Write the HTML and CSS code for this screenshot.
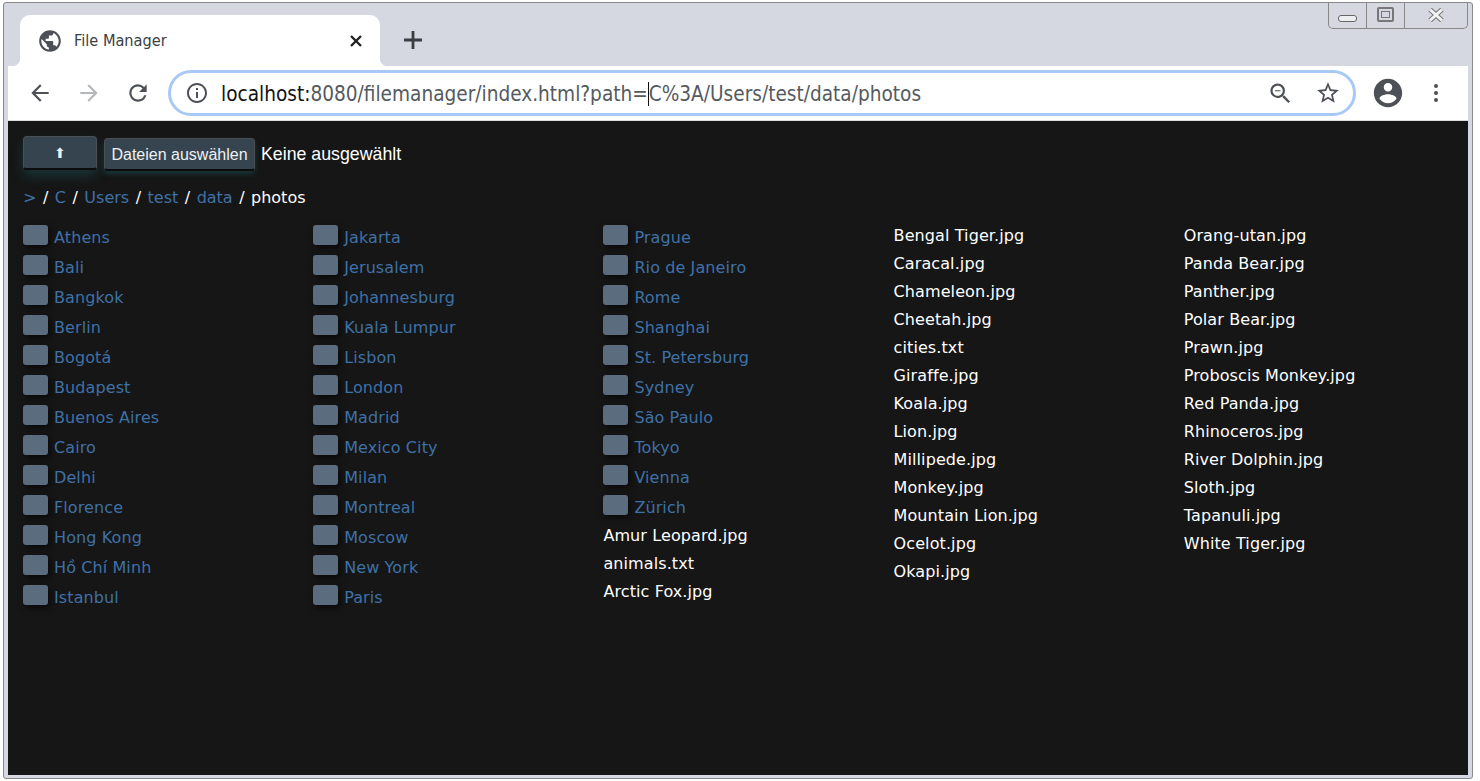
FILE: index.html
```html
<!DOCTYPE html>
<html lang="en">
<head>
    <meta charset="UTF-8">
    <title>File Manager</title>
    <link rel="stylesheet" href="styles.css">
</head>
<body>
    <div class="window">
        <div class="tabstrip">
            <div class="tab">
                <svg class="favicon" viewBox="0 0 24 24"><path d="M12 2C6.48 2 2 6.48 2 12s4.48 10 10 10 10-4.48 10-10S17.52 2 12 2zm-1 17.93c-3.95-.49-7-3.85-7-7.93 0-.62.08-1.21.21-1.79L9 15v1c0 1.1.9 2 2 2v1.93zm6.9-2.54c-.26-.81-1-1.39-1.9-1.39h-1v-3c0-.55-.45-1-1-1H8v-2h2c.55 0 1-.45 1-1V7h2c1.1 0 2-.9 2-2v-.41c2.93 1.19 5 4.06 5 7.41 0 2.08-.8 3.97-2.1 5.39z"/></svg>
                <span class="tab-title">File Manager</span>
                <svg class="tab-close" viewBox="0 0 14 14"><path d="M2 2l10 10M12 2L2 12"/></svg>
            </div>
            <svg class="new-tab" viewBox="0 0 20 20"><path d="M10 1v18M1 10h18"/></svg>
            <div class="win-controls">
                <div class="win-btn win-min"><span class="min-bar"></span></div>
                <div class="win-btn win-max"><span class="max-box"></span></div>
                <div class="win-btn win-close">
                    <svg viewBox="0 0 18 14"><path class="x-outer" d="M3 1.5l12 11M15 1.5l-12 11"/><path class="x-inner" d="M3 1.5l12 11M15 1.5l-12 11"/></svg>
                </div>
            </div>
        </div>
        <div class="toolbar">
            <svg class="tool-icon back" viewBox="0 0 24 24"><path d="M20 11H7.83l5.59-5.59L12 4l-8 8 8 8 1.41-1.41L7.83 13H20v-2z"/></svg>
            <svg class="tool-icon forward" viewBox="0 0 24 24"><path d="M4 11h12.17l-5.59-5.59L12 4l8 8-8 8-1.41-1.41L16.17 13H4v-2z"/></svg>
            <svg class="tool-icon reload" viewBox="0 0 24 24"><path d="M17.65 6.35A7.958 7.958 0 0 0 12 4c-4.42 0-7.99 3.58-7.99 8s3.57 8 7.99 8c3.73 0 6.84-2.55 7.73-6h-2.08A5.99 5.99 0 0 1 12 18c-3.31 0-6-2.69-6-6s2.69-6 6-6c1.66 0 3.14.69 4.22 1.78L13 11h7V4l-2.35 2.35z"/></svg>
            <div class="omnibox">
                <svg class="omni-icon" viewBox="0 0 24 24"><path d="M11 7h2v2h-2zm0 4h2v6h-2zm1-9C6.48 2 2 6.48 2 12s4.48 10 10 10 10-4.48 10-10S17.52 2 12 2zm0 18c-4.41 0-8-3.59-8-8s3.59-8 8-8 8 3.59 8 8-3.59 8-8 8z"/></svg>
                <div class="url"><span class="host">localhost:</span>8080/filemanager/index.html?path=<span class="caret"></span>C%3A/Users/test/data/photos</div>
                <svg class="omni-icon zoom-out" viewBox="0 0 24 24"><path d="M15.5 14h-.79l-.28-.27A6.471 6.471 0 0 0 16 9.5 6.5 6.5 0 1 0 9.5 16c1.61 0 3.09-.59 4.23-1.57l.27.28v.79l5 4.99L20.49 19l-4.99-5zm-6 0C7.01 14 5 11.99 5 9.5S7.01 5 9.5 5 14 7.01 14 9.5 11.99 14 9.5 14zM7 9h5v1H7z"/></svg>
                <svg class="omni-icon star" viewBox="0 0 24 24"><path d="M22 9.24l-7.19-.62L12 2 9.19 8.63 2 9.24l5.46 4.73L5.82 21 12 17.27 18.18 21l-1.63-7.03L22 9.24zM12 15.4l-3.76 2.27 1-4.28-3.32-2.88 4.38-.38L12 6.1l1.71 4.04 4.38.38-3.32 2.88 1 4.28L12 15.4z"/></svg>
            </div>
            <svg class="account" viewBox="0 0 24 24"><path d="M12 2C6.48 2 2 6.48 2 12s4.48 10 10 10 10-4.48 10-10S17.52 2 12 2zm0 3c1.66 0 3 1.34 3 3s-1.34 3-3 3-3-1.34-3-3 1.34-3 3-3zm0 14.2c-2.5 0-4.71-1.28-6-3.22.03-1.99 4-3.08 6-3.08 1.99 0 5.97 1.09 6 3.08-1.29 1.94-3.5 3.22-6 3.22z"/></svg>
            <svg class="menu-dots" viewBox="0 0 6 20"><circle cx="3" cy="3" r="2"/><circle cx="3" cy="10" r="2"/><circle cx="3" cy="17" r="2"/></svg>
        </div>
        <div class="page">
            <div class="actions">
                <button class="btn btn-up" type="button">⬆</button>
                <button class="btn btn-file" type="button">Dateien auswählen</button>
                <span class="no-file">Keine ausgewählt</span>
            </div>
            <div class="crumbs">
                <a>&gt;</a> / <a>C</a> / <a>Users</a> / <a>test</a> / <a>data</a> / photos
            </div>
            <div class="listing">
                <ul class="column">
                    <li class="dir"><span class="check"></span><a>Athens</a></li>
                    <li class="dir"><span class="check"></span><a>Bali</a></li>
                    <li class="dir"><span class="check"></span><a>Bangkok</a></li>
                    <li class="dir"><span class="check"></span><a>Berlin</a></li>
                    <li class="dir"><span class="check"></span><a>Bogotá</a></li>
                    <li class="dir"><span class="check"></span><a>Budapest</a></li>
                    <li class="dir"><span class="check"></span><a>Buenos Aires</a></li>
                    <li class="dir"><span class="check"></span><a>Cairo</a></li>
                    <li class="dir"><span class="check"></span><a>Delhi</a></li>
                    <li class="dir"><span class="check"></span><a>Florence</a></li>
                    <li class="dir"><span class="check"></span><a>Hong Kong</a></li>
                    <li class="dir"><span class="check"></span><a>Hồ Chí Minh</a></li>
                    <li class="dir"><span class="check"></span><a>Istanbul</a></li>
                </ul>
                <ul class="column">
                    <li class="dir"><span class="check"></span><a>Jakarta</a></li>
                    <li class="dir"><span class="check"></span><a>Jerusalem</a></li>
                    <li class="dir"><span class="check"></span><a>Johannesburg</a></li>
                    <li class="dir"><span class="check"></span><a>Kuala Lumpur</a></li>
                    <li class="dir"><span class="check"></span><a>Lisbon</a></li>
                    <li class="dir"><span class="check"></span><a>London</a></li>
                    <li class="dir"><span class="check"></span><a>Madrid</a></li>
                    <li class="dir"><span class="check"></span><a>Mexico City</a></li>
                    <li class="dir"><span class="check"></span><a>Milan</a></li>
                    <li class="dir"><span class="check"></span><a>Montreal</a></li>
                    <li class="dir"><span class="check"></span><a>Moscow</a></li>
                    <li class="dir"><span class="check"></span><a>New York</a></li>
                    <li class="dir"><span class="check"></span><a>Paris</a></li>
                </ul>
                <ul class="column">
                    <li class="dir"><span class="check"></span><a>Prague</a></li>
                    <li class="dir"><span class="check"></span><a>Rio de Janeiro</a></li>
                    <li class="dir"><span class="check"></span><a>Rome</a></li>
                    <li class="dir"><span class="check"></span><a>Shanghai</a></li>
                    <li class="dir"><span class="check"></span><a>St. Petersburg</a></li>
                    <li class="dir"><span class="check"></span><a>Sydney</a></li>
                    <li class="dir"><span class="check"></span><a>São Paulo</a></li>
                    <li class="dir"><span class="check"></span><a>Tokyo</a></li>
                    <li class="dir"><span class="check"></span><a>Vienna</a></li>
                    <li class="dir"><span class="check"></span><a>Zürich</a></li>
                    <li class="file">Amur Leopard.jpg</li>
                    <li class="file">animals.txt</li>
                    <li class="file">Arctic Fox.jpg</li>
                </ul>
                <ul class="column">
                    <li class="file">Bengal Tiger.jpg</li>
                    <li class="file">Caracal.jpg</li>
                    <li class="file">Chameleon.jpg</li>
                    <li class="file">Cheetah.jpg</li>
                    <li class="file">cities.txt</li>
                    <li class="file">Giraffe.jpg</li>
                    <li class="file">Koala.jpg</li>
                    <li class="file">Lion.jpg</li>
                    <li class="file">Millipede.jpg</li>
                    <li class="file">Monkey.jpg</li>
                    <li class="file">Mountain Lion.jpg</li>
                    <li class="file">Ocelot.jpg</li>
                    <li class="file">Okapi.jpg</li>
                </ul>
                <ul class="column">
                    <li class="file">Orang-utan.jpg</li>
                    <li class="file">Panda Bear.jpg</li>
                    <li class="file">Panther.jpg</li>
                    <li class="file">Polar Bear.jpg</li>
                    <li class="file">Prawn.jpg</li>
                    <li class="file">Proboscis Monkey.jpg</li>
                    <li class="file">Red Panda.jpg</li>
                    <li class="file">Rhinoceros.jpg</li>
                    <li class="file">River Dolphin.jpg</li>
                    <li class="file">Sloth.jpg</li>
                    <li class="file">Tapanuli.jpg</li>
                    <li class="file">White Tiger.jpg</li>
                </ul>
            </div>
        </div>
    </div>
</body>
</html>
```

FILE: styles.css
```css
html, body {
    margin: 0;
    height: 100%;
    background-color: #fff;
    overflow: hidden;
}
.window {
    box-sizing: border-box;
    display: flex;
    flex-direction: column;
    width: 1470px;
    height: 777px;
    margin: 2px 0 0 3px;
    padding: 0 4px 3px 4px;
    background-color: #d5d8e0;
    border: 1px solid #888;
    border-radius: 3px;
    font-family: "DejaVu Sans", sans-serif;
}

/* tab strip */
.tabstrip {
    display: flex;
    flex: none;
    align-items: flex-start;
    height: 63px;
    margin-right: -1px;
}
.tab {
    position: relative;
    box-sizing: border-box;
    display: flex;
    align-items: center;
    width: 360px;
    height: 51px;
    margin: 12px 0 0 12px;
    padding: 0 17px 0 17px;
    background-color: #fff;
    border-radius: 10px 10px 0 0;
}
.tab::before, .tab::after {
    content: "";
    position: absolute;
    bottom: 0;
    width: 8px;
    height: 8px;
}
.tab::before {
    left: -8px;
    background: radial-gradient(circle at 0 0, transparent 8px, #fff 8.5px);
}
.tab::after {
    right: -8px;
    background: radial-gradient(circle at 100% 0, transparent 8px, #fff 8.5px);
}
.favicon {
    width: 26px;
    height: 26px;
    fill: #4d5157;
}
.tab-title {
    flex: 1;
    margin-left: 11px;
    font-size: 16.2px;
    font-stretch: condensed;
    color: #3c4043;
}
.tab-close {
    width: 14px;
    height: 14px;
    fill: none;
    stroke: #222;
    stroke-width: 2.4;
}
.new-tab {
    width: 20px;
    height: 20px;
    margin: 27px 0 0 23px;
    fill: none;
    stroke: #3a3e42;
    stroke-width: 2.8;
}
.win-controls {
    box-sizing: border-box;
    display: flex;
    height: 26px;
    margin-left: auto;
    margin-right: 1px;
    background-color: #d5d8e0;
    border: 1px solid #888;
    border-top: none;
    border-radius: 0 0 5px 5px;
}
.win-btn {
    display: flex;
    align-items: center;
    justify-content: center;
    height: 100%;
    border-left: 1px solid #888;
}
.win-min {
    width: 37px;
    border-left: none;
}
.win-max {
    width: 37px;
}
.win-close {
    width: 62px;
}
.min-bar {
    box-sizing: border-box;
    width: 19px;
    height: 7px;
    margin-top: 6px;
    background-color: #eceef2;
    border: 1px solid #666;
    border-radius: 3px;
}
.max-box {
    box-sizing: border-box;
    width: 17px;
    height: 15px;
    margin-top: -2px;
    border: 2px solid #777;
    border-radius: 2px;
    background-color: #d5d8e0;
    box-shadow: inset 0 0 0 2px #d5d8e0, inset 0 0 0 3px #777;
}
.win-close svg {
    width: 18px;
    height: 14px;
    margin-top: -2px;
    fill: none;
}
.x-outer {
    stroke: #777;
    stroke-width: 5;
}
.x-inner {
    stroke: #f2f3f5;
    stroke-width: 3;
}

/* address bar row */
.toolbar {
    display: flex;
    flex: none;
    align-items: center;
    height: 54px;
    background-color: #fff;
    border-bottom: 1px solid #d9dbdf;
}
.tool-icon {
    flex: none;
    width: 26px;
    height: 26px;
    margin-left: 20px;
    fill: #4d5157;
}
.tool-icon.back {
    margin-left: 19px;
}
.tool-icon.forward {
    margin-left: 23px;
    fill: #b5b7ba;
}
.tool-icon.reload {
    margin-left: 23px;
}
.omnibox {
    box-sizing: border-box;
    display: flex;
    flex: none;
    align-items: center;
    width: 1188px;
    height: 46px;
    margin-left: 17px;
    padding: 0 12px 0 14px;
    border: 3px solid #a8c9f6;
    border-radius: 23px;
}
.omni-icon {
    flex: none;
    width: 24px;
    height: 24px;
    fill: #4d5157;
}
.url {
    flex: 1;
    margin-left: 12px;
    padding-top: 1px;
    font-size: 20.6px;
    font-stretch: condensed;
    color: #555a60;
    white-space: nowrap;
}
.host {
    color: #111;
}
.caret {
    border-left: 1px solid #111;
}
.zoom-out {
    width: 27px;
    height: 27px;
    margin-right: 21px;
}
.star {
    width: 26px;
    height: 26px;
}
.account {
    flex: none;
    width: 34px;
    height: 34px;
    margin-left: 15px;
    fill: #4d5157;
}
.menu-dots {
    flex: none;
    width: 6px;
    height: 20px;
    margin-left: 28px;
    fill: #4d5157;
}

/* file manager */
.page {
    flex: 1;
    padding: 15px 15px 0 15px;
    background-color: #161616;
    color: #fff;
    font-size: 16px;
}
.actions {
    display: flex;
    align-items: flex-start;
    height: 36px;
}
.btn {
    box-sizing: border-box;
    padding: 1px 0 0 0;
    color: #eef1f4;
    background-color: #36444f;
    border: 1px solid #4b4f53;
    border-bottom: 2px solid #0c0c0c;
    border-radius: 4px;
    font-family: "Liberation Sans", sans-serif;
    font-size: 16px;
}
.btn-up {
    width: 74px;
    height: 34px;
    font-size: 14px;
    box-shadow: 0 6px 12px rgba(30, 95, 105, 0.4);
}
.btn-file {
    width: 151px;
    height: 33px;
    margin: 2px 0 0 7px;
    box-shadow: 0 3px 5px rgba(30, 95, 105, 0.45);
}
.no-file {
    align-self: center;
    margin-left: 6px;
    font-family: "Liberation Sans", sans-serif;
    font-size: 17.75px;
}
.crumbs {
    height: 24px;
    margin-top: 14px;
    line-height: 24px;
    word-spacing: 1.4px;
}
a {
    color: #3f71a6;
}
.listing {
    display: grid;
    grid-template-columns: repeat(5, 290.2px);
    margin-top: 15px;
    letter-spacing: 0.1px;
}
.column {
    margin: 0;
    padding: 0;
    list-style: none;
}
.dir {
    display: flex;
    height: 30px;
    line-height: 26px;
}
.check {
    flex: none;
    width: 25px;
    height: 20px;
    margin: 0 6px 0 0;
    background-color: #5c6c7f;
    border-radius: 3px;
    box-shadow: 2px 3px 6px rgba(0, 0, 0, 0.6);
}
.file {
    height: 28px;
    line-height: 22px;
}
```
